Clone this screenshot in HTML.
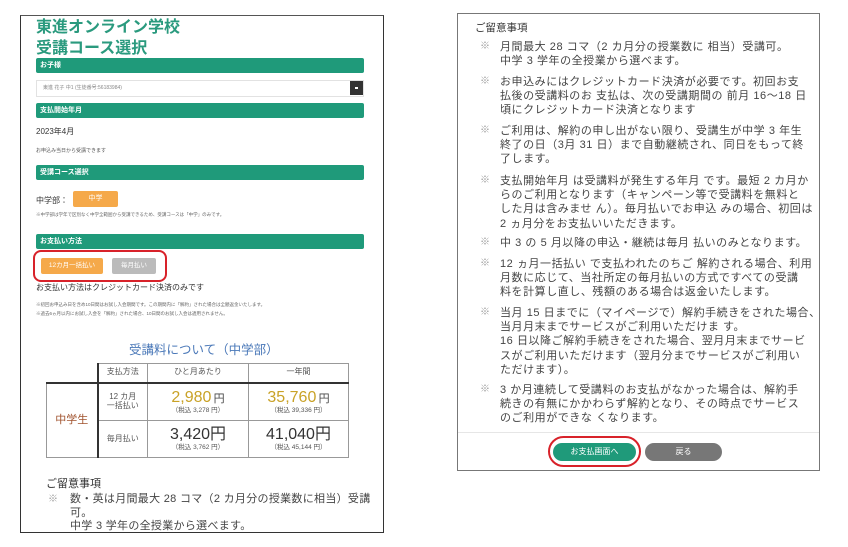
<!DOCTYPE html>
<html><head><meta charset="utf-8"><style>
*{margin:0;padding:0;box-sizing:border-box}
body{width:848px;height:547px;background:#fff;position:relative;overflow:hidden;font-family:"Liberation Sans","Noto Sans CJK JP",sans-serif;color:#333}
.a{position:absolute;white-space:nowrap}
.bar{position:absolute;left:36px;width:328px;height:15px;background:#1f9a7a;border-radius:2px;color:#fff;font-size:7px;font-weight:bold;padding-left:4px;line-height:15px}
.t{font-size:11px;letter-spacing:0.3px;line-height:13.5px;color:#444}
.r{font-size:11px;letter-spacing:0.55px;line-height:14.2px;color:#444}
.m{color:#999;font-size:10px}
table{position:absolute;left:46px;top:363px;border-collapse:collapse;font-size:8px;color:#555}
td{border:1px solid #999;text-align:center;line-height:1.1}
</style></head><body>
<!-- left panel -->
<div class="a" style="left:20px;top:15px;width:364px;height:518px;border:1.5px solid #333;border-top-color:#555"></div>
<div class="a" style="left:36px;top:18px;font-size:16px;font-weight:bold;color:#2a9a7e;line-height:20px">東進オンライン学校</div>
<div class="a" style="left:36px;top:39px;font-size:16px;font-weight:bold;color:#2a9a7e;line-height:20px">受講コース選択</div>
<div class="bar" style="top:58px">お子様</div>
<div class="a" style="left:36px;top:80px;width:328px;height:17px;border:1px solid #e2e2e2;font-size:5px;color:#888;line-height:15px;padding-left:6px">東進 花子 中1 (生徒番号:56183984)</div>
<div class="a" style="left:350px;top:81px;width:13px;height:14px;background:#333"></div>
<div class="a" style="left:355px;top:87px;width:3px;height:2px;background:#fff"></div>
<div class="bar" style="top:103px">支払開始年月</div>
<div class="a" style="left:36px;top:126px;font-size:8px;color:#333">2023年4月</div>
<div class="a" style="left:36px;top:147px;font-size:5px;color:#555">お申込み当日から受講できます</div>
<div class="bar" style="top:165px">受講コース選択</div>
<div class="a" style="left:36px;top:195px;font-size:8px;color:#333">中学部：</div>
<div class="a" style="left:73px;top:191px;width:45px;height:16px;background:#f5a94a;border-radius:2px;color:#fff;font-size:7px;text-align:center;line-height:16px">中学</div>
<div class="a" style="left:36px;top:212px;font-size:4.5px;color:#666">※中学部は学年で区別なく中学全範囲から受講できるため、受講コースは「中学」のみです。</div>
<div class="bar" style="top:234px">お支払い方法</div>
<div class="a" style="left:33px;top:250px;width:134px;height:32px;border:2.5px solid #d8222a;border-radius:8px"></div>
<div class="a" style="left:41px;top:258px;width:62px;height:16px;background:#f5a94a;border-radius:2px;color:#fff;font-size:6.5px;text-align:center;line-height:16px">12カ月一括払い</div>
<div class="a" style="left:112px;top:258px;width:44px;height:16px;background:#bbb;border-radius:2px;color:#fff;font-size:6.5px;text-align:center;line-height:16px">毎月払い</div>
<div class="a" style="left:36px;top:282px;font-size:8px;color:#333">お支払い方法はクレジットカード決済のみです</div>
<div class="a" style="left:36px;top:300px;font-size:4.5px;color:#666;line-height:9px">※初回お申込み日を含め10日間はお試し入会期間です。この期間内に「解約」された場合は全額返金いたします。<br>※過去6ヵ月以内にお試し入会を「解約」された場合、10日間のお試し入会は適用されません。</div>
<div class="a" style="left:129px;top:339px;font-size:12.5px;color:#4a78b8">受講料について（中学部）</div>
<table>
<tr style="height:19px"><td style="width:51px;border:none;border-bottom:2px solid #333"></td><td style="width:50px;border-left:2px solid #333;border-bottom:2px solid #333">支払方法</td><td style="width:101px;border-bottom:2px solid #333">ひと月あたり</td><td style="width:100px;border-bottom:2px solid #333">一年間</td></tr>
<tr style="height:38px"><td rowspan="2" style="color:#a0522d;font-size:11px;border-left:1px solid #999">中学生</td><td style="border-left:2px solid #333">12 カ月<br>一括払い</td><td><span style="font-size:16px;color:#c9a227">2,980</span> <span style="font-size:11px;color:#444">円</span><br><span style="font-size:6.5px">（税込 3,278 円）</span></td><td><span style="font-size:16px;color:#c9a227">35,760</span> <span style="font-size:11px;color:#444">円</span><br><span style="font-size:6.5px">（税込 39,336 円）</span></td></tr>
<tr style="height:37px"><td style="border-left:2px solid #333">毎月払い</td><td><span style="font-size:16px;color:#333">3,420円</span><br><span style="font-size:6.5px">（税込 3,762 円）</span></td><td><span style="font-size:16px;color:#333">41,040円</span><br><span style="font-size:6.5px">（税込 45,144 円）</span></td></tr>
</table>
<div class="a" style="left:46px;top:475px;font-size:11px;color:#333">ご留意事項</div>
<div class="a t" style="left:48px;top:493px"><span class="m">※</span></div>
<div class="a t" style="left:70px;top:493px">数・英は月間最大 28 コマ（2 カ月分の授業数に相当）受講<br>可。<br>中学 3 学年の全授業から選べます。</div>

<!-- right panel -->
<div class="a" style="left:457px;top:13px;width:363px;height:458px;border:1px solid #777"></div>
<div class="a" style="left:475px;top:20px;font-size:10.5px;color:#333">ご留意事項</div>
<div class="a" style="left:480px;top:40px;font-size:10px;color:#999;line-height:14.2px">
<div style="position:absolute;top:0">※</div><div style="position:absolute;top:35px">※</div><div style="position:absolute;top:84px">※</div><div style="position:absolute;top:134px">※</div><div style="position:absolute;top:196px">※</div><div style="position:absolute;top:217px">※</div><div style="position:absolute;top:266px">※</div><div style="position:absolute;top:343px">※</div></div>
<div class="a r" style="left:500px;top:40px">月間最大 28 コマ（2 カ月分の授業数に 相当）受講可。<br>中学 3 学年の全授業から選べます。</div>
<div class="a r" style="left:500px;top:75px">お申込みにはクレジットカード決済が必要です。初回お支<br>払後の受講料のお 支払は、次の受講期間の 前月 16〜18 日<br>頃にクレジットカード決済となります</div>
<div class="a r" style="left:500px;top:124px">ご利用は、解約の申し出がない限り、受講生が中学 3 年生<br>終了の日（3月 31 日）まで自動継続され、同日をもって終<br>了します。</div>
<div class="a r" style="left:500px;top:174px">支払開始年月 は受講料が発生する年月 です。最短 2 カ月か<br>らのご利用となります（キャンペーン等で受講料を無料と<br>した月は含みませ ん）。毎月払いでお申込 みの場合、初回は<br>2 ヵ月分をお支払いいただきます。</div>
<div class="a r" style="left:500px;top:236px">中 3 の 5 月以降の申込・継続は毎月 払いのみとなります。</div>
<div class="a r" style="left:500px;top:257px">12 ヵ月一括払い で支払われたのちご 解約される場合、利用<br>月数に応じて、当社所定の毎月払いの方式ですべての受講<br>料を計算し直し、残額のある場合は返金いたします。</div>
<div class="a r" style="left:500px;top:306px">当月 15 日までに（マイページで）解約手続きをされた場合、<br>当月月末までサービスがご利用いただけま す。<br>16 日以降ご解約手続きをされた場合、翌月月末までサービ<br>スがご利用いただけます（翌月分までサービスがご利用い<br>ただけます）。</div>
<div class="a r" style="left:500px;top:383px">3 か月連続して受講料のお支払がなかった場合は、解約手<br>続きの有無にかかわらず解約となり、その時点でサービス<br>のご利用ができな くなります。</div>
<div class="a" style="left:458px;top:432px;width:361px;height:1px;background:#e6e6e6"></div>
<div class="a" style="left:548px;top:436px;width:93px;height:31px;border:2.5px solid #d8222a;border-radius:16px"></div>
<div class="a" style="left:553px;top:443px;width:83px;height:18px;background:#1f9a7a;border-radius:9px;color:#fff;font-size:8px;text-align:center;line-height:18px">お支払画面へ</div>
<div class="a" style="left:645px;top:443px;width:77px;height:18px;background:#777;border-radius:9px;color:#fff;font-size:8px;text-align:center;line-height:18px">戻る</div>
</body></html>
